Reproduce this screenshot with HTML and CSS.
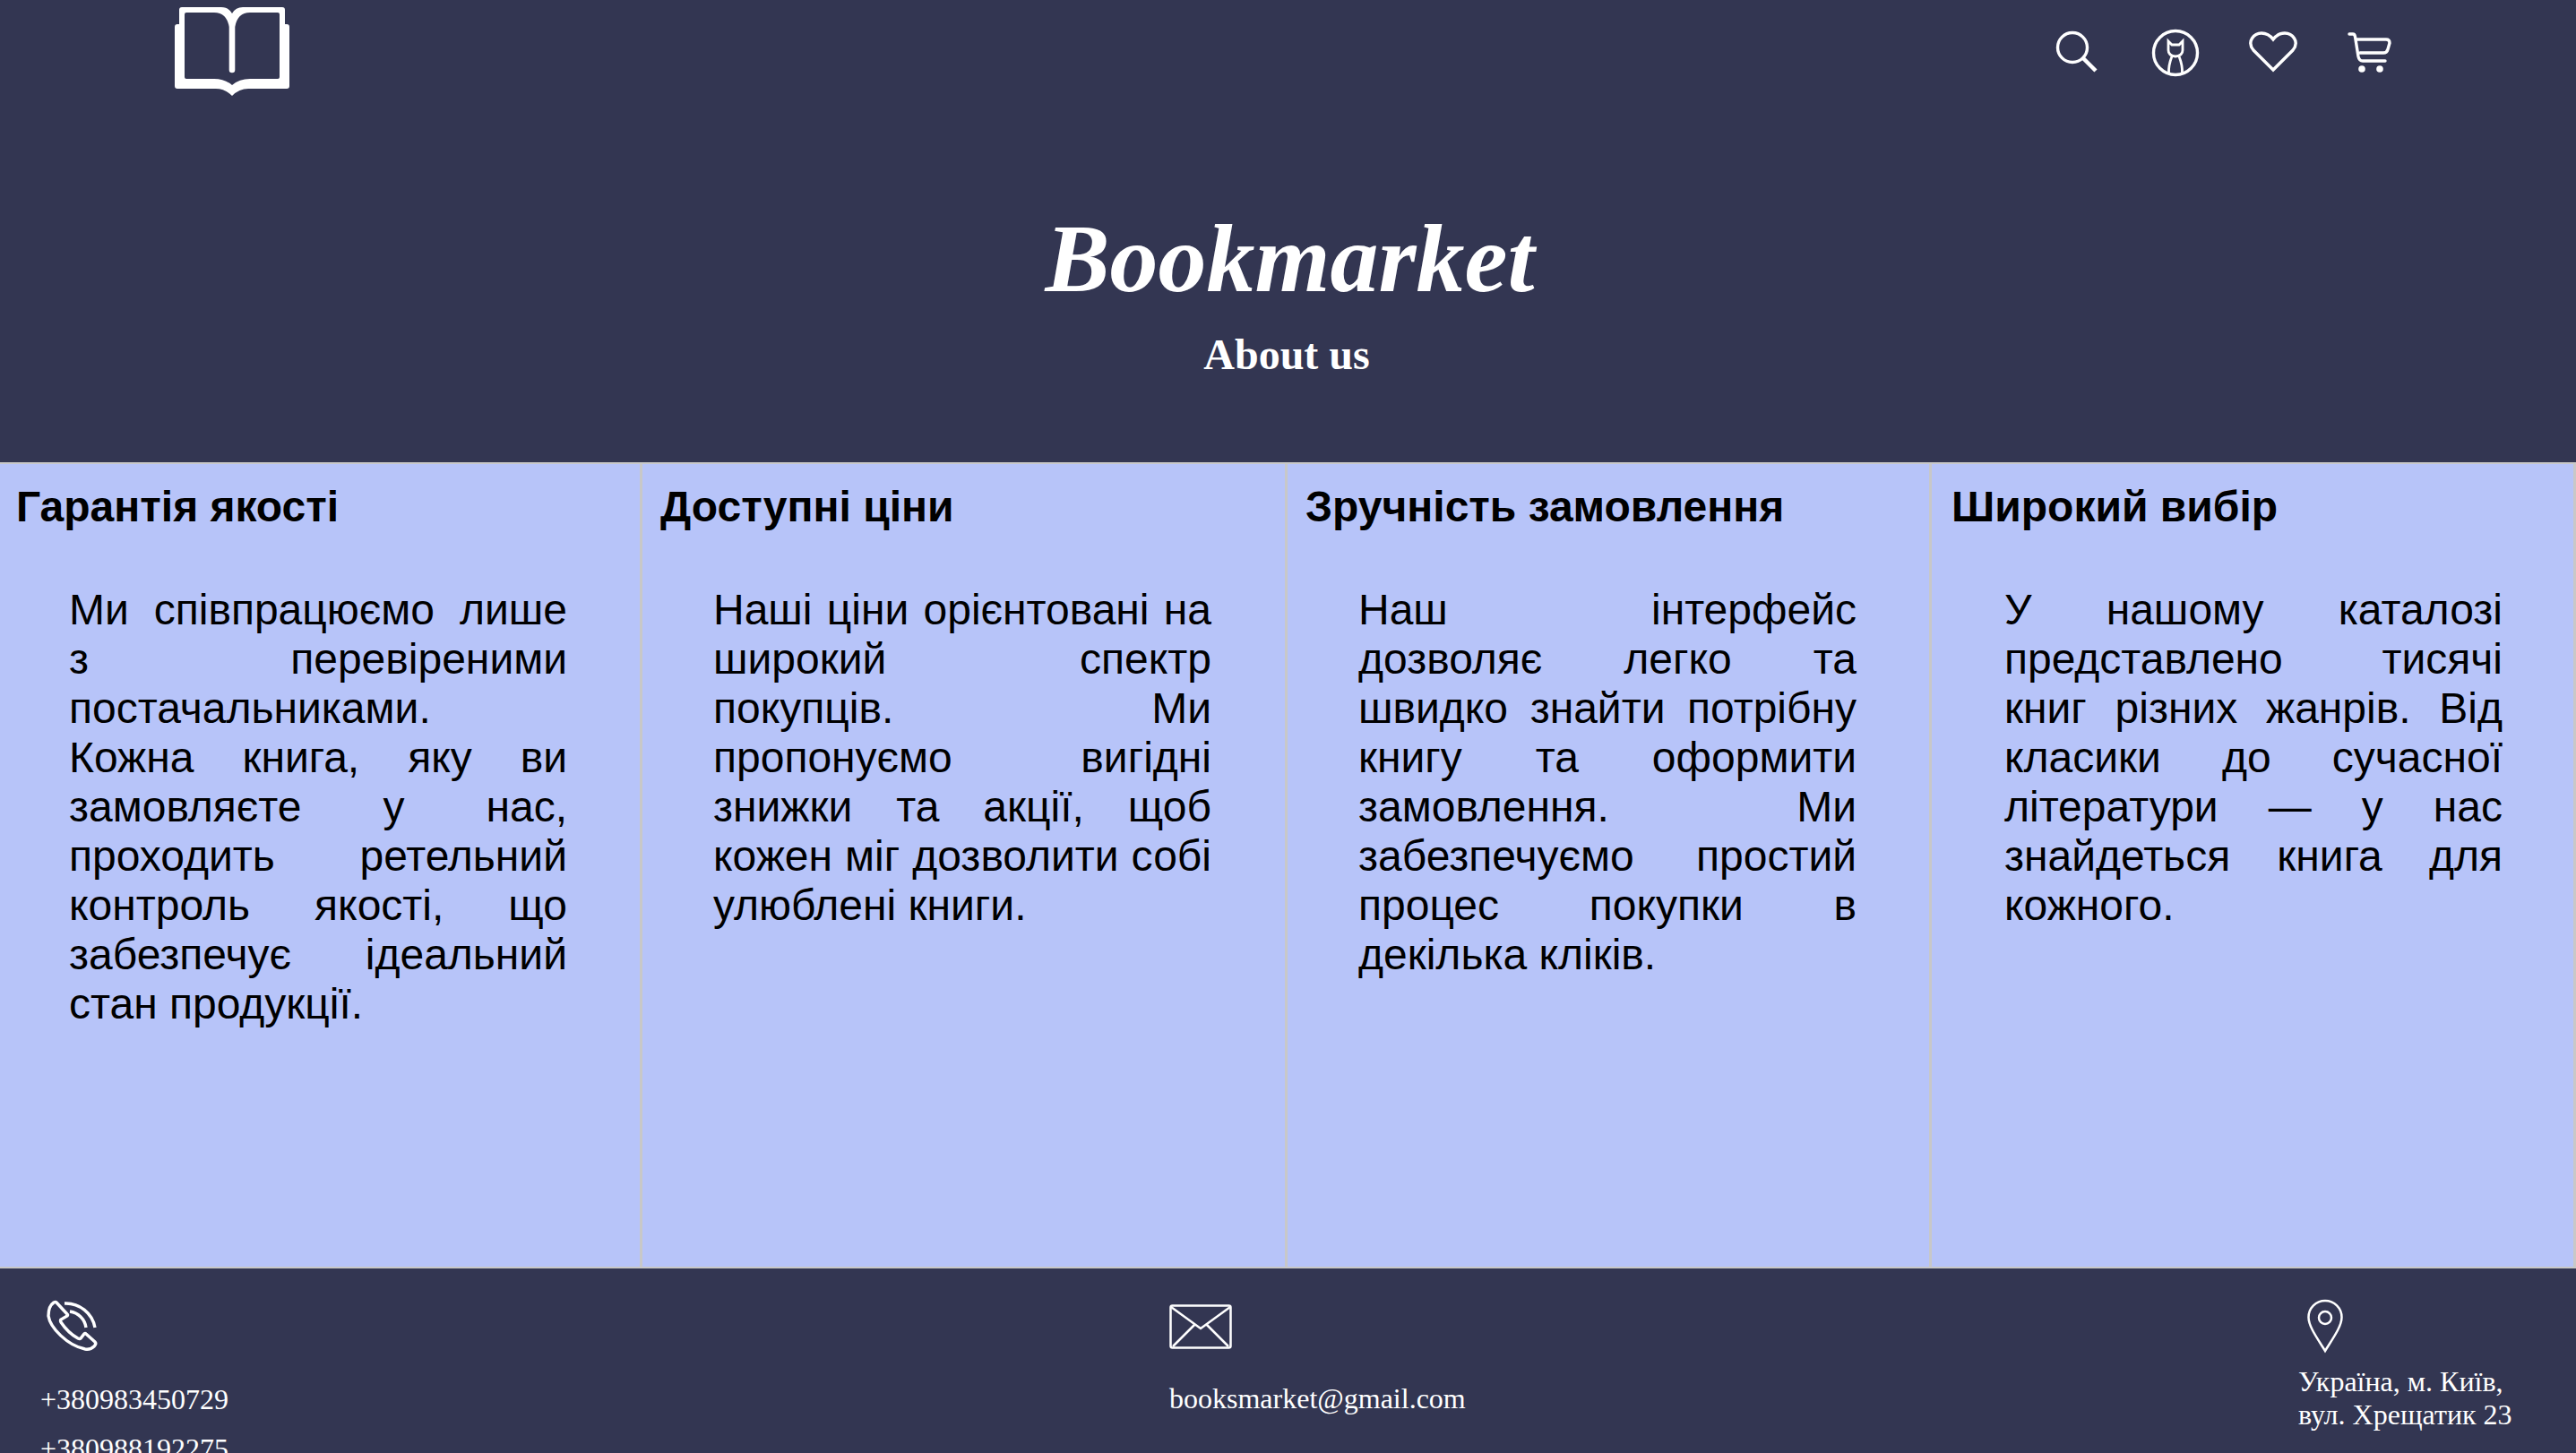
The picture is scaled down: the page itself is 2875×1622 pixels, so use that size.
FILE: index.html
```html
<!DOCTYPE html>
<html lang="uk">
<head>
  <meta charset="UTF-8" />
  <meta name="viewport" content="width=device-width, initial-scale=1.0" />
  <title>Bookmarket - About us</title>
  <link rel="stylesheet" href="styles.css">
</head>
<body>
  <header class="header">
    <div class="topbar">
      <svg class="logo" viewBox="0 0 128 100" width="128" height="100">
        <path fill="#fff" fill-rule="evenodd" d="M8 0H52Q60 0 64 7Q68 0 76 0H120Q123 0 123 3V19H125Q128 19 128 22V88Q128 91 125 91H82Q72 91 64 99Q56 91 46 91H3Q0 91 0 88V22Q0 19 3 19H5V3Q5 0 8 0ZM13 6Q11 6 11 8V78Q11 80 13 80H44Q56 80 64 87Q72 80 84 80H115Q117 80 117 78V8Q117 6 115 6H84Q70 6 67.3 22V70A3.3 3.3 0 0 1 60.7 70V22Q58 6 44 6Z"/>
      </svg>
      <nav class="icons">
        <svg viewBox="0 0 45 45" width="45" height="45" class="icon icon-search">
          <circle cx="18" cy="18" r="16.5"/>
          <path stroke-width="4.5" d="M29.5 29.5L44 44"/>
        </svg>
        <svg viewBox="0 0 52 52" width="52" height="52" class="icon icon-user">
          <circle cx="26" cy="26" r="24.5"/>
          <path stroke-width="2.8" d="M18 13L22 17H30L34 13V23Q34 29 26 30Q18 29 18 23ZM22 30Q18 40 18.5 49M30 30Q34 40 33.5 49"/>
        </svg>
        <svg viewBox="0 0 54 45" width="54" height="45" class="icon icon-heart">
          <path d="M27 43L5 21C-3 11 6 2 14 2C20 2 24 5 27 9C30 5 34 2 40 2C48 2 57 11 49 21Z"/>
        </svg>
        <svg viewBox="0 0 48 46" width="48" height="46" class="icon icon-cart">
          <path stroke-linecap="round" d="M2 3H6Q8 3 8.5 6L12 28Q13 33 17 33H42M9 9H43Q47 9 47 13L45 20Q44 24 40 24H14"/>
          <circle class="dot" cx="16" cy="42" r="3.8"/>
          <circle class="dot" cx="36" cy="42" r="3.8"/>
        </svg>
      </nav>
    </div>
    <h1 class="brand">Bookmarket</h1>
    <h2 class="subtitle">About us</h2>
  </header>

  <main class="cards">
    <section class="card">
      <h3>Гарантія якості</h3>
      <p>Ми співпрацюємо лише з перевіреними постачальниками.<br>Кожна книга, яку ви замовляєте у нас, проходить ретельний контроль якості, що забезпечує ідеальний стан продукції.</p>
    </section>
    <section class="card">
      <h3>Доступні ціни</h3>
      <p>Наші ціни орієнтовані на широкий спектр покупців. Ми пропонуємо вигідні знижки та акції, щоб кожен міг дозволити собі улюблені книги.</p>
    </section>
    <section class="card">
      <h3>Зручність замовлення</h3>
      <p>Наш інтерфейс дозволяє легко та швидко знайти потрібну книгу та оформити замовлення. Ми забезпечуємо простий процес покупки в декілька кліків.</p>
    </section>
    <section class="card">
      <h3>Широкий вибір</h3>
      <p>У нашому каталозі представлено тисячі книг різних жанрів. Від класики до сучасної літератури — у нас знайдеться книга для кожного.</p>
    </section>
  </main>

  <footer class="footer">
    <div class="contact contact-phone">
      <svg viewBox="0 0 56 56" width="56" height="56" class="icon">
        <path d="M10 2L22 15Q23 16 22 17L15 21Q14 22 15 24Q23 36 34 42Q36 43 37 42L41 37Q42 36 43 37L53 46Q55 48 52 51Q48 55 42 54C22 50 3 30 1 17Q1 6 7 2Q9 1 10 2Z"/>
        <path d="M19 3A33 33 0 0 1 53 30M25 12A21 21 0 0 1 43 30"/>
      </svg>
      <p>+380983450729</p>
      <p>+380988192275</p>
    </div>
    <div class="contact contact-mail">
      <svg viewBox="0 0 70 50" width="70" height="50" class="icon icon-thin">
        <rect x="1.5" y="1.5" width="67" height="47" rx="2"/>
        <path d="M2 3L35 27L68 3M4 47L28 23M42 23L66 47"/>
      </svg>
      <p>booksmarket@gmail.com</p>
    </div>
    <div class="contact contact-address">
      <svg viewBox="0 0 40 59" width="40" height="59" class="icon icon-thin">
        <path d="M20 57C12 44 1.5 30 1.5 19.5A18.5 18.5 0 0 1 38.5 19.5C38.5 30 28 44 20 57Z"/>
        <circle cx="20" cy="20" r="7"/>
      </svg>
      <p>Україна, м. Київ,<br>вул. Хрещатик 23</p>
    </div>
  </footer>
</body>
</html>
```
FILE: styles.css
```css
:root {
  --fondo: #333652;
  --card-bg: #b7c4f9;
  --line: #c8c8c8;
}

* {
  box-sizing: border-box;
}

html, body {
  height: 100%;
  overflow: hidden;
}

body {
  margin: 0;
  background: var(--fondo);
  color: #fff;
  font-family: "Liberation Serif", "Times New Roman", serif;
}

.header {
  height: 518px;
  border-bottom: 2px solid var(--line);
  text-align: center;
}

.topbar {
  height: 108px;
  padding: 8px 207px 0 195px;
  display: flex;
  justify-content: space-between;
}

.logo {
  display: block;
}

.icons {
  display: flex;
  align-items: flex-start;
  gap: 56px;
  padding-top: 25px;
}

.icon {
  display: block;
  fill: none;
  stroke: #fff;
  stroke-width: 3.4;
  overflow: visible;
}

.icon .dot {
  fill: #fff;
  stroke: none;
}

.icon-search {
  margin-right: 6px;
  margin-top: 2px;
}

.icon-heart,
.icon-cart {
  margin-top: 2px;
}

.icon-thin {
  stroke-width: 2.5;
}

.brand {
  margin: 110px 0 0;
  padding-left: 4px;
  font-size: 108px;
  line-height: 142px;
  font-style: italic;
  font-weight: bold;
}

.subtitle {
  margin: 8px 0 0;
  padding-right: 3px;
  font-size: 48px;
  line-height: 55px;
  font-weight: bold;
}

.cards {
  height: 898px;
  display: grid;
  grid-template-columns: 717px 720px 719px 1fr;
  background: var(--card-bg);
  border-bottom: 2px solid var(--line);
  color: #000;
  font-family: "Liberation Sans", Arial, sans-serif;
  font-size: 48px;
  line-height: 55px;
}

.card {
  padding: 20px 0 0 20px;
  border-right: 3px solid var(--line);
}

.card:first-child {
  padding-left: 18px;
}

.card:last-child {
  padding-left: 22px;
}

.card h3 {
  margin: 0;
  font-size: 48px;
  line-height: 55px;
  font-weight: bold;
}

.card p {
  width: 556px;
  margin: 60px 0 0 59px;
  text-align: justify;
}

.footer {
  display: grid;
  grid-template-columns: 1260px 1260px 1fr;
  padding-left: 45px;
  font-size: 32px;
}

.contact p {
  margin: 0;
}

.contact-phone {
  padding-top: 36px;
}

.contact-phone .icon {
  margin: 0 0 36px 8px;
}

.contact-phone p {
  margin-bottom: 18px;
}

.contact-mail {
  padding-top: 40px;
}

.contact-mail .icon {
  margin-bottom: 37px;
}

.contact-address {
  padding-top: 35px;
}

.contact-address .icon {
  margin: 0 0 14px 10px;
}
```
